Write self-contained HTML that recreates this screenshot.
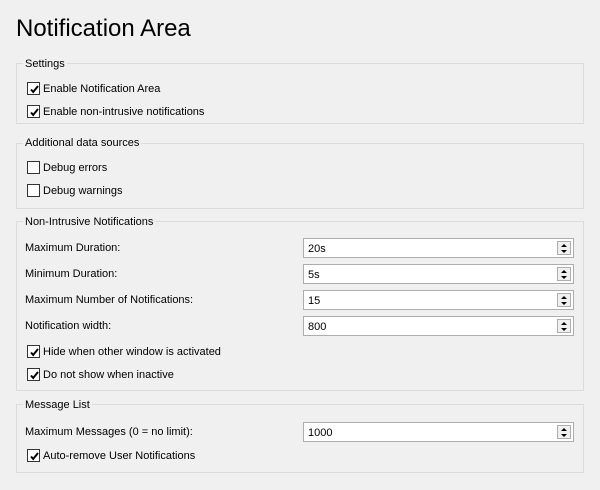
<!DOCTYPE html>
<html><head><style>
*{margin:0;padding:0;box-sizing:border-box}
body{width:600px;height:490px;background:#f0f0f0;font-family:"Liberation Sans",sans-serif;font-size:11px;color:#000;position:relative;overflow:hidden}
.t{position:absolute;left:16px;top:15px;font-size:24px;color:#000}
.g{position:absolute;left:16px;width:568px;border:1px solid #dcdcdc}
.lg{position:absolute;left:23px;background:#f0f0f0;padding:0 2px;top:0}
.cb{position:absolute;left:27px;width:13px;height:13px;border:1px solid #333;background:#fff}
.cb svg{position:absolute;left:1px;top:1px}
.l{position:absolute;left:43px}
.lb{position:absolute;left:25px}
.sp{position:absolute;left:303px;width:271px;height:20px;border:1px solid #adadad;background:#fff;padding:4px 0 0 4px}
.sp .b{position:absolute;right:2px;top:2px;width:14px;height:14px;border:1px solid #adadad;background:#f0f0f0}
.sp .b:before{content:"";position:absolute;left:3px;top:2px;border-left:3px solid transparent;border-right:3px solid transparent;border-bottom:3px solid #000}
.sp .b:after{content:"";position:absolute;left:3px;top:8px;border-left:3px solid transparent;border-right:3px solid transparent;border-top:3px solid #000}
</style></head><body>
<div class="t">Notification Area</div>

<div class="g" style="top:63px;height:61px"></div>
<div class="lg" style="top:58px">Settings</div>
<div class="cb" style="top:82px"><svg width="11" height="11"><path d="M2 5.5L4.2 8L9 2" stroke="#000" stroke-width="2" fill="none"/></svg></div><div class="l" style="top:83px">Enable Notification Area</div>
<div class="cb" style="top:105px"><svg width="11" height="11"><path d="M2 5.5L4.2 8L9 2" stroke="#000" stroke-width="2" fill="none"/></svg></div><div class="l" style="top:106px">Enable non-intrusive notifications</div>

<div class="g" style="top:143px;height:66px"></div>
<div class="lg" style="top:137px">Additional data sources</div>
<div class="cb" style="top:161px"></div><div class="l" style="top:162px">Debug errors</div>
<div class="cb" style="top:184px"></div><div class="l" style="top:185px">Debug warnings</div>

<div class="g" style="top:221px;height:170px"></div>
<div class="lg" style="top:216px">Non-Intrusive Notifications</div>
<div class="lb" style="top:242px">Maximum Duration:</div><div class="sp" style="top:238px">20s<div class="b"></div></div>
<div class="lb" style="top:268px">Minimum Duration:</div><div class="sp" style="top:264px">5s<div class="b"></div></div>
<div class="lb" style="top:294px">Maximum Number of Notifications:</div><div class="sp" style="top:290px">15<div class="b"></div></div>
<div class="lb" style="top:320px">Notification width:</div><div class="sp" style="top:316px">800<div class="b"></div></div>
<div class="cb" style="top:345px"><svg width="11" height="11"><path d="M2 5.5L4.2 8L9 2" stroke="#000" stroke-width="2" fill="none"/></svg></div><div class="l" style="top:346px">Hide when other window is activated</div>
<div class="cb" style="top:368px"><svg width="11" height="11"><path d="M2 5.5L4.2 8L9 2" stroke="#000" stroke-width="2" fill="none"/></svg></div><div class="l" style="top:369px">Do not show when inactive</div>

<div class="g" style="top:404px;height:69px"></div>
<div class="lg" style="top:399px">Message List</div>
<div class="lb" style="top:426px">Maximum Messages (0 = no limit):</div><div class="sp" style="top:422px">1000<div class="b"></div></div>
<div class="cb" style="top:449px"><svg width="11" height="11"><path d="M2 5.5L4.2 8L9 2" stroke="#000" stroke-width="2" fill="none"/></svg></div><div class="l" style="top:450px">Auto-remove User Notifications</div>
</body></html>
